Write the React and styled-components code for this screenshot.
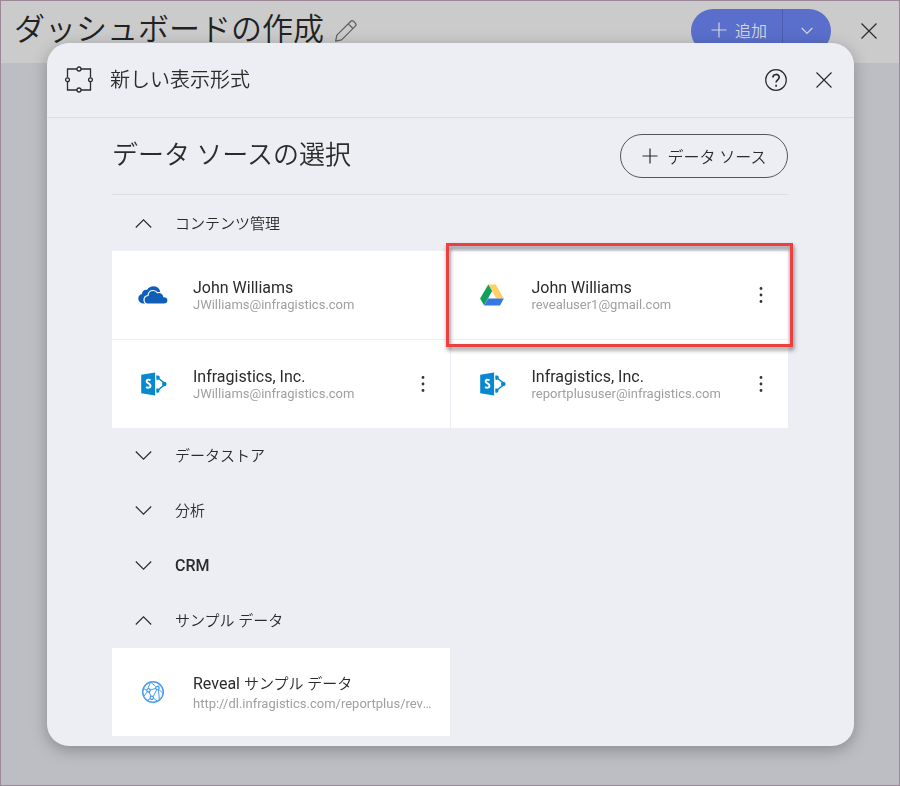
import React, { useState } from "react";
import styled, { createGlobalStyle, css } from "styled-components";

const GlobalStyle = createGlobalStyle`
  *, *::before, *::after { box-sizing: border-box; }
  body {
    margin: 0;
    font-family: Roboto, "Noto Sans CJK JP", sans-serif;
    color: #2b2b2b;
    background: #bdbec3;
  }
  h1, h2, h3, p, ul { margin: 0; padding: 0; font-weight: 350; }
  button { font: inherit; color: inherit; background: none; border: 0; padding: 0; cursor: pointer; }
`;

const Page = styled.div`
  min-height: 100vh;
  border: 1px solid #9c8796;
`;

const TopBar = styled.header`
  display: flex;
  align-items: center;
  height: 62px;
  padding: 0 16px 2px 13px;
  background: #cbcbcb;
`;

const PageTitle = styled.h1`
  font-size: 31px;
  line-height: 44px;
  padding-bottom: 2px;
  color: #222;
  white-space: nowrap;
`;

const IconButton = styled.button`
  display: grid;
  place-items: center;
  width: 28px;
  height: 28px;
  flex: none;
`;

const EditButton = styled(IconButton)`
  margin: 0 auto 0 8px;
`;

const SplitButton = styled.div`
  display: flex;
  height: 44px;
  margin-right: 24px;
  border-radius: 22px;
  background: #5a6fcb;
  color: #d3d5de;
  overflow: hidden;
`;

const AddButton = styled.button`
  display: flex;
  align-items: center;
  gap: 7px;
  width: 92px;
  padding: 0 0 2px 19px;
  font-size: 16px;
  font-weight: 350;
  border-right: 1px solid #4c5db0;
`;

const AddMenuButton = styled.button`
  display: grid;
  place-items: center;
  width: 48px;
`;

const Overlay = styled.div`
  position: fixed;
  inset: 0;
  display: flex;
  padding: 43px 46px 40px 47px;
`;

const Dialog = styled.section`
  flex: 1;
  min-width: 0;
  border-radius: 22px;
  background: #edeef4;
  box-shadow: 0 4px 16px rgba(0, 0, 0, 0.28);
  overflow: auto;
`;

const DialogHeader = styled.header`
  display: flex;
  align-items: center;
  height: 75px;
  padding: 0 16px 0 18px;
  border-bottom: 1px solid #dddee4;
`;

const DialogTitle = styled.h2`
  flex: 1;
  padding-left: 17px;
  font-size: 20px;
  line-height: 30px;
`;

const HeaderActions = styled.div`
  display: flex;
  gap: 20px;
`;

const Content = styled.div`
  padding: 16px 66px 10px 65px;
`;

const ContentHeader = styled.div`
  display: flex;
  align-items: center;
  justify-content: space-between;
  margin-bottom: 1px;
  padding-bottom: 16px;
  border-bottom: 1px solid #dddee4;
`;

const ContentTitle = styled.h3`
  font-size: 26px;
  line-height: 38px;
  padding-bottom: 2px;
`;

const SourceButton = styled.button`
  display: flex;
  align-items: center;
  justify-content: center;
  gap: 8px;
  width: 168px;
  height: 44px;
  border: 1px solid #55565a;
  border-radius: 22px;
  font-size: 16px;
  font-weight: 350;
`;

const GroupToggle = styled.button`
  display: flex;
  align-items: center;
  gap: 23px;
  width: 100%;
  height: 55px;
  padding-left: 23px;
  font-size: ${(p) => (p.$strong ? 16 : 15)}px;
  line-height: 24px;
  font-weight: ${(p) => (p.$strong ? 500 : 350)};
  text-align: left;
`;

const Cards = styled.ul`
  display: grid;
  grid-template-columns: repeat(2, minmax(0, 1fr));
  gap: 1px;
  list-style: none;
`;

const Card = styled.li`
  position: relative;
  display: flex;
  align-items: center;
  height: 88px;
  padding: 0 13px 0 25px;
  background: #fff;
  ${(p) =>
    p.$highlighted &&
    css`
      &::after {
        content: "";
        position: absolute;
        inset: -8px -5px;
        border: 3px solid #ef3e3e;
        filter: drop-shadow(1px 3px 2px rgba(0, 0, 0, 0.5));
        pointer-events: none;
        z-index: 1;
      }
    `}
`;

const CardText = styled.div`
  flex: 1;
  min-width: 0;
  padding: 2px 0 0 24px;
`;

const CardName = styled.p`
  font-size: 16px;
  line-height: 18px;
  font-weight: 400;
  padding-bottom: ${(p) => (p.$roomy ? 3 : 0)}px;
`;

const JapaneseText = styled.span`
  font-size: 15px;
  font-weight: 350;
`;

const CardDetail = styled.p`
  font-size: 13px;
  line-height: 16px;
  font-weight: 400;
  color: #a0a0a0;
  white-space: nowrap;
  overflow: hidden;
  text-overflow: ellipsis;
`;

const Line = styled.svg`
  display: block;
  flex: none;
  fill: none;
  stroke: currentColor;
  stroke-width: ${(p) => p.$weight || 1.2};
`;

const Logo = styled.svg`
  display: block;
  flex: none;
`;

const Plus = () => (
  <Line width="18" height="18" viewBox="0 0 18 18" aria-hidden="true">
    <path d="M9 1.5v15M1.5 9h15" />
  </Line>
);

const Cross = () => (
  <Line width="18" height="18" viewBox="0 0 18 18" aria-hidden="true">
    <path d="M1.5 1.5l15 15M16.5 1.5l-15 15" />
  </Line>
);

const Chevron = ({ up }) => (
  <Line width="17" height="11" viewBox="0 0 17 11" aria-hidden="true">
    <path d={up ? "M.8 9.5l7.7-7.7 7.7 7.7" : "M.8 1.5l7.7 7.7 7.7-7.7"} />
  </Line>
);

const SmallChevron = () => (
  <Line width="12" height="8" viewBox="0 0 12 8" aria-hidden="true">
    <path d="M.7 1l5.3 5.5L11.3 1" />
  </Line>
);

const Pencil = () => (
  <Line width="24" height="24" viewBox="0 0 24 24" aria-hidden="true">
    <g stroke="#606060" strokeLinejoin="round">
      <path d="M1.6 22.2l1.3-6L16.6 2.5a2.2 2.2 0 0 1 3.1 0l1.6 1.6a2.2 2.2 0 0 1 0 3.1L7.6 20.9z" />
      <path d="M14.3 4.8l4.700 4.700" />
    </g>
  </Line>
);

const Frame = () => (
  <Line width="28" height="28" viewBox="0 0 28 28" $weight={1.3} aria-hidden="true">
    <path d="M12 3H2.5v8.7M16 3h9.5v8.7M2.5 15.7V24H12M25.5 15.7V24H16" />
    <circle cx="14" cy="3" r="2" />
    <circle cx="14" cy="24" r="2" />
    <circle cx="2.5" cy="13.7" r="1.9" />
    <circle cx="25.5" cy="13.7" r="1.9" />
  </Line>
);

const Help = () => (
  <Line width="24" height="24" viewBox="0 0 24 24" aria-hidden="true">
    <circle cx="12" cy="12" r="10.3" />
    <path strokeWidth="1.7" d="M8.9 9.5c0-4 6.3-4 6.3-.2 0 2.4-3.1 2.7-3.1 5.2M12.1 16.8v1.9" />
  </Line>
);

const Dots = () => (
  <Logo width="4" height="18" viewBox="0 0 4 18" fill="#353535" aria-hidden="true">
    <circle cx="2" cy="2.5" r="1.4" />
    <circle cx="2" cy="9" r="1.4" />
    <circle cx="2" cy="15.5" r="1.4" />
  </Logo>
);

const OneDrive = () => (
  <Logo width="32" height="24" viewBox="0 0 32 24" aria-hidden="true">
    <path
      fill="#0f5fb8"
      d="M8 20.500C3.500 20.700 1.300 18.500 1.300 15.500c0-2.400 1.700-4.100 3.700-4.500.1-3 2.300-4.700 5-4.100C11.500 4.500 13.800 3.300 16.400 3.300c3.200 0 5.800 1.900 6.700 4.700V15z"
    />
    <path
      fill="#0f5fb8"
      stroke="#fff"
      strokeWidth="1.200"
      d="M11.700 21.100c-2.800 0-4.700-1.700-4.700-4.200 0-2.400 1.600-4.100 4-4.400.2-3 2.200-5 5.100-5 1.900 0 3.400.8 4.400 2.300 3.200-1 6 .8 6.300 3.900 2.500.1 4.200 1.500 4.200 3.600 0 2.200-1.600 3.800-3.900 3.800z"
    />
  </Logo>
);

const Drive = () => (
  <Logo width="32" height="24" viewBox="0 0 32 24" aria-hidden="true">
    <path fill="#ffd061" d="M12.300 1.500h7.500l8 14h-7.500z" />
    <path fill="#12a05a" d="M12.300 1.500l3.800 6.600-8 14.400-4-7z" />
    <path fill="#3777e3" d="M12.100 15.500h15.700L24 22.500H8.200z" />
  </Logo>
);

const SharePoint = () => (
  <Logo width="32" height="26" viewBox="0 0 32 26" aria-hidden="true">
    <path fill="#0788d1" d="M4.200 3.800l13.900-2.300v23L4.200 22.300z" />
    <path fill="none" stroke="#fff" strokeWidth="2" d="M13.600 9.100c-2-.9-4-.4-4 1.300 0 2.300 3.900 1.800 3.900 4.300 0 2.200-2.500 2.500-4.500 1.500" />
    <path fill="none" stroke="#0788d1" strokeWidth="1.500" d="M20.500 6.500l8 6.500-8 6.500" />
    <g fill="#0788d1">
      <path d="M19.300 4.500h2a2.200 2.200 0 1 1-2 3.900zM19.300 17.500h2a2.200 2.200 0 1 1-2 4z" />
      <circle cx="27.200" cy="13" r="2.300" />
    </g>
  </Logo>
);

const Globe = () => (
  <Logo width="32" height="24" viewBox="0 0 32 24" fill="none" stroke="#4a9cef" aria-hidden="true">
    <circle cx="16" cy="12" r="10.300" strokeWidth="1.500" />
    <path d="M13 10l6-1.600M12.300 12l1.700 4.500M19.800 9.500l-3.600 7M9.800 10.500L6.700 8.600M11 8.300l2.500-6.200M18.700 6.400L13.500 2M21.300 6.200l1.700-1.800M22 9.500l4 4M21.500 10l.9 10M10 12l-3.200 4.500M13.200 18.600l-2.800 1.800M17 18.600l3.300 2.500" />
    <g fill="#fff" strokeWidth="1.300">
      <circle cx="11.500" cy="10.300" r="1.700" />
      <circle cx="20.500" cy="8" r="1.700" />
      <circle cx="14.800" cy="17.800" r="1.700" />
    </g>
  </Logo>
);

const groups = [
  {
    title: "コンテンツ管理",
    open: true,
    items: [
      { logo: OneDrive, name: "John Williams", detail: "JWilliams@infragistics.com" },
      { logo: Drive, name: "John Williams", detail: "revealuser1@gmail.com", menu: true, highlighted: true },
      { logo: SharePoint, name: "Infragistics, Inc.", detail: "JWilliams@infragistics.com", menu: true },
      { logo: SharePoint, name: "Infragistics, Inc.", detail: "reportplususer@infragistics.com", menu: true },
    ],
  },
  { title: "データストア", items: [] },
  { title: "分析", items: [] },
  { title: "CRM", strong: true, items: [] },
  {
    title: "サンプル データ",
    open: true,
    items: [
      {
        logo: Globe,
        name: "Reveal ",
        japanese: "サンプル データ",
        detail: "http://dl.infragistics.com/reportplus/reveal/samples",
      },
    ],
  },
];

function SourceCard({ item }) {
  const Icon = item.logo;
  return (
    <Card $highlighted={item.highlighted}>
      <Icon />
      <CardText>
        <CardName $roomy={Boolean(item.japanese)}>
          {item.name}
          {item.japanese && <JapaneseText>{item.japanese}</JapaneseText>}
        </CardName>
        <CardDetail>{item.detail}</CardDetail>
      </CardText>
      {item.menu && (
        <IconButton aria-label="メニュー">
          <Dots />
        </IconButton>
      )}
    </Card>
  );
}

function SourceGroup({ group }) {
  const [open, setOpen] = useState(Boolean(group.open));
  return (
    <section>
      <GroupToggle $strong={group.strong} aria-expanded={open} onClick={() => setOpen(!open)}>
        <Chevron up={open} />
        {group.title}
      </GroupToggle>
      {open && (
        <Cards>
          {group.items.map((item, i) => (
            <SourceCard key={i} item={item} />
          ))}
        </Cards>
      )}
    </section>
  );
}

export default function App() {
  return (
    <>
      <GlobalStyle />
      <Page lang="ja">
        <TopBar>
          <PageTitle>ダッシュボードの作成</PageTitle>
          <EditButton aria-label="編集">
            <Pencil />
          </EditButton>
          <SplitButton>
            <AddButton>
              <Plus />
              追加
            </AddButton>
            <AddMenuButton aria-label="その他の追加">
              <SmallChevron />
            </AddMenuButton>
          </SplitButton>
          <IconButton aria-label="閉じる">
            <Cross />
          </IconButton>
        </TopBar>
      </Page>
      <Overlay lang="ja">
        <Dialog role="dialog" aria-labelledby="dialog-title">
          <DialogHeader>
            <Frame />
            <DialogTitle id="dialog-title">新しい表示形式</DialogTitle>
            <HeaderActions>
              <IconButton aria-label="ヘルプ">
                <Help />
              </IconButton>
              <IconButton aria-label="閉じる">
                <Cross />
              </IconButton>
            </HeaderActions>
          </DialogHeader>
          <Content>
            <ContentHeader>
              <ContentTitle>データ ソースの選択</ContentTitle>
              <SourceButton>
                <Plus />
                データ ソース
              </SourceButton>
            </ContentHeader>
            {groups.map((group) => (
              <SourceGroup key={group.title} group={group} />
            ))}
          </Content>
        </Dialog>
      </Overlay>
    </>
  );
}
